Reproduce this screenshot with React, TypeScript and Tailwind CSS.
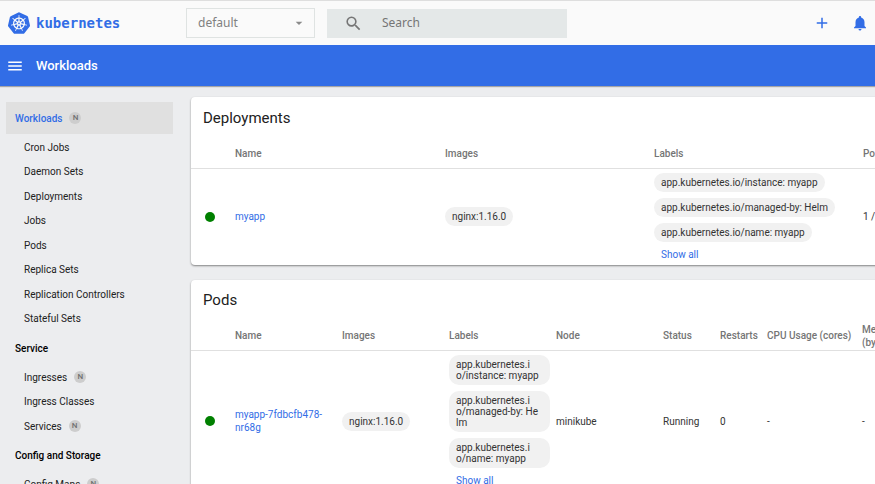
import type { ReactNode } from "react";
import { MdAdd, MdArrowDropDown, MdMenu, MdNotifications, MdSearch } from "react-icons/md";
import { SiKubernetes } from "react-icons/si";

type NavItem = { name: string; namespaced?: boolean };
type NavGroup = { title: string; items: NavItem[] };

const workloads: NavItem[] = [
  { name: "Cron Jobs" },
  { name: "Daemon Sets" },
  { name: "Deployments" },
  { name: "Jobs" },
  { name: "Pods" },
  { name: "Replica Sets" },
  { name: "Replication Controllers" },
  { name: "Stateful Sets" },
];

const groups: NavGroup[] = [
  {
    title: "Service",
    items: [
      { name: "Ingresses", namespaced: true },
      { name: "Ingress Classes" },
      { name: "Services", namespaced: true },
    ],
  },
  {
    title: "Config and Storage",
    items: [{ name: "Config Maps", namespaced: true }],
  },
];

const deploymentLabels = [
  "app.kubernetes.io/instance: myapp",
  "app.kubernetes.io/managed-by: Helm",
  "app.kubernetes.io/name: myapp",
];

const podLabels = [
  "app.kubernetes.i\no/instance: myapp",
  "app.kubernetes.i\no/managed-by: He\nlm",
  "app.kubernetes.i\no/name: myapp",
];

function NamespacedBadge() {
  return (
    <span className="flex size-3 items-center justify-center rounded-full bg-[#cdcdcd] text-[8px] font-medium text-[#707070]">
      N
    </span>
  );
}

function NavList({ items }: { items: NavItem[] }) {
  return (
    <ul>
      {items.map((item) => (
        <li key={item.name} className="even:pb-px">
          <a href="#" className="flex h-6 items-center gap-[7px] pl-[18px]">
            {item.name}
            {item.namespaced && <NamespacedBadge />}
          </a>
        </li>
      ))}
    </ul>
  );
}

function Sidebar() {
  return (
    <nav className="w-[173px] shrink-0 pt-4 pl-1.5 text-[10px] text-[#212121]">
      <a
        href="#"
        className="mb-px flex h-8 items-center gap-[7px] bg-[#e0e0e0] pl-[9px] font-medium text-[#326de6]"
      >
        Workloads
        <NamespacedBadge />
      </a>
      <NavList items={workloads} />
      {groups.map((group) => (
        <section key={group.title}>
          <h2 className="flex h-[34px] items-center pl-[9px] font-medium text-black">{group.title}</h2>
          <NavList items={group.items} />
        </section>
      ))}
    </nav>
  );
}

function Chip({ children, fill = false }: { children: ReactNode; fill?: boolean }) {
  return (
    <span
      className={`${fill ? "block w-full" : "inline-block"} rounded-[10px] bg-[#f1f1f1] px-[7px] py-1 align-top leading-[11px] whitespace-pre-line`}
    >
      {children}
    </span>
  );
}

function LabelChips({ labels, fill = false }: { labels: string[]; fill?: boolean }) {
  return (
    <div className="flex flex-col items-start gap-1.5">
      {labels.map((label) => (
        <Chip key={label} fill={fill}>
          {label}
        </Chip>
      ))}
      <button type="button" className="ml-[7px] h-3.5 leading-3.5 text-[#326de6]">
        Show all
      </button>
    </div>
  );
}

function StatusDot() {
  return <span role="img" aria-label="Running" className="ml-3.5 block size-2.5 rounded-full bg-[#008000]" />;
}

function Card({ title, columns, widths, children }: {
  title: string;
  columns: string[];
  widths: string[];
  children: ReactNode;
}) {
  return (
    <section className="mb-[15px] min-w-[881px] rounded-sm bg-white shadow-[0_1px_2px_rgba(0,0,0,0.45)]">
      <h2 className="flex h-[42px] items-center pl-3 text-[15px] text-[#212121]">{title}</h2>
      <table className="w-full table-fixed border-collapse text-left text-[10px] text-[#333]">
        <colgroup>
          {widths.map((width, i) => (
            <col key={i} className={width} />
          ))}
        </colgroup>
        <thead className="text-[#757575]">
          <tr className="h-[29px] border-b border-[#e0e0e0]">
            <td />
            {columns.map((column) => (
              <th key={column} scope="col" className="py-0 pr-1 leading-[13px] font-medium">
                {column}
              </th>
            ))}
          </tr>
        </thead>
        <tbody>{children}</tbody>
      </table>
    </section>
  );
}

export default function App() {
  return (
    <div className="h-screen overflow-hidden bg-[#ecedef] font-[Roboto,sans-serif]">
      <header className="flex h-[45px] items-center border-t border-[#dedede] bg-[#fafafa] pr-1.5 pl-2">
        <a href="#" className="flex w-[178px] items-center gap-1.5 text-[#326de6]">
          <SiKubernetes size={22} />
          <span className="font-['DejaVu_Sans_Mono',monospace] text-sm font-bold">kubernetes</span>
        </a>
        <div className="flex h-[30px] w-[129px] items-center border border-[#dfe3e2]">
          <select
            aria-label="Namespace"
            className="h-full w-full appearance-none pl-[11px] font-['Noto_Sans',sans-serif] text-xs text-[#808080]"
          >
            <option>default</option>
          </select>
          <MdArrowDropDown size={16} className="pointer-events-none mr-[7px] shrink-0 text-[#8a8a8a]" />
        </div>
        <label className="ml-3 flex h-[29px] w-60 items-center bg-[#e4e8e8] pl-[17px] text-[#757575]">
          <MdSearch size={19} className="shrink-0" />
          <input
            type="search"
            aria-label="Search"
            placeholder="Search"
            className="ml-[19px] w-full font-['Noto_Sans',sans-serif] text-xs outline-none placeholder:text-[#757575]"
          />
        </label>
        <div className="ml-auto flex items-center gap-5 text-[#326de6]">
          <button type="button" aria-label="Create new resource">
            <MdAdd size={18} />
          </button>
          <button type="button" aria-label="Notifications">
            <MdNotifications size={18} />
          </button>
        </div>
      </header>
      <div className="flex h-[41px] items-center gap-3 bg-[#326de6] pl-1.5 text-white shadow-[0_1px_1px_rgba(0,0,0,0.3)]">
        <button type="button" aria-label="Toggle menu">
          <MdMenu size={18} />
        </button>
        <h1 className="text-[13px] font-medium">Workloads</h1>
      </div>
      <div className="flex">
        <Sidebar />
        <main className="min-w-0 flex-1 pt-[11px] pl-[18px]">
          <Card
            title="Deployments"
            columns={["Name", "Images", "Labels", "Pods"]}
            widths={["w-[44px]", "w-[210px]", "w-[209px]", "w-[209px]", "w-auto"]}
          >
            <tr>
              <td>
                <StatusDot />
              </td>
              <td>
                <a href="#" className="text-[#326de6]">myapp</a>
              </td>
              <td>
                <Chip>nginx:1.16.0</Chip>
              </td>
              <td className="pt-1 pb-[3px]">
                <LabelChips labels={deploymentLabels} />
              </td>
              <td>1 / 1</td>
            </tr>
          </Card>
          <Card
            title="Pods"
            columns={["Name", "Images", "Labels", "Node", "Status", "Restarts", "CPU Usage (cores)", "Memory Usage (bytes)", "Created"]}
            widths={["w-[44px]", "w-[107px]", "w-[107px]", "w-[107px]", "w-[107px]", "w-[57px]", "w-[47px]", "w-[95px]", "w-[85px]", "w-auto"]}
          >
            <tr>
              <td>
                <StatusDot />
              </td>
              <td className="pr-3 leading-[13px]">
                <a href="#" className="text-[#326de6]">myapp-7fdbcfb478-nr68g</a>
              </td>
              <td>
                <Chip>nginx:1.16.0</Chip>
              </td>
              <td className="pt-1 pr-1.5 pb-[3px]">
                <LabelChips labels={podLabels} fill />
              </td>
              <td>minikube</td>
              <td>Running</td>
              <td>0</td>
              <td>-</td>
              <td>-</td>
              <td />
            </tr>
          </Card>
        </main>
      </div>
    </div>
  );
}
